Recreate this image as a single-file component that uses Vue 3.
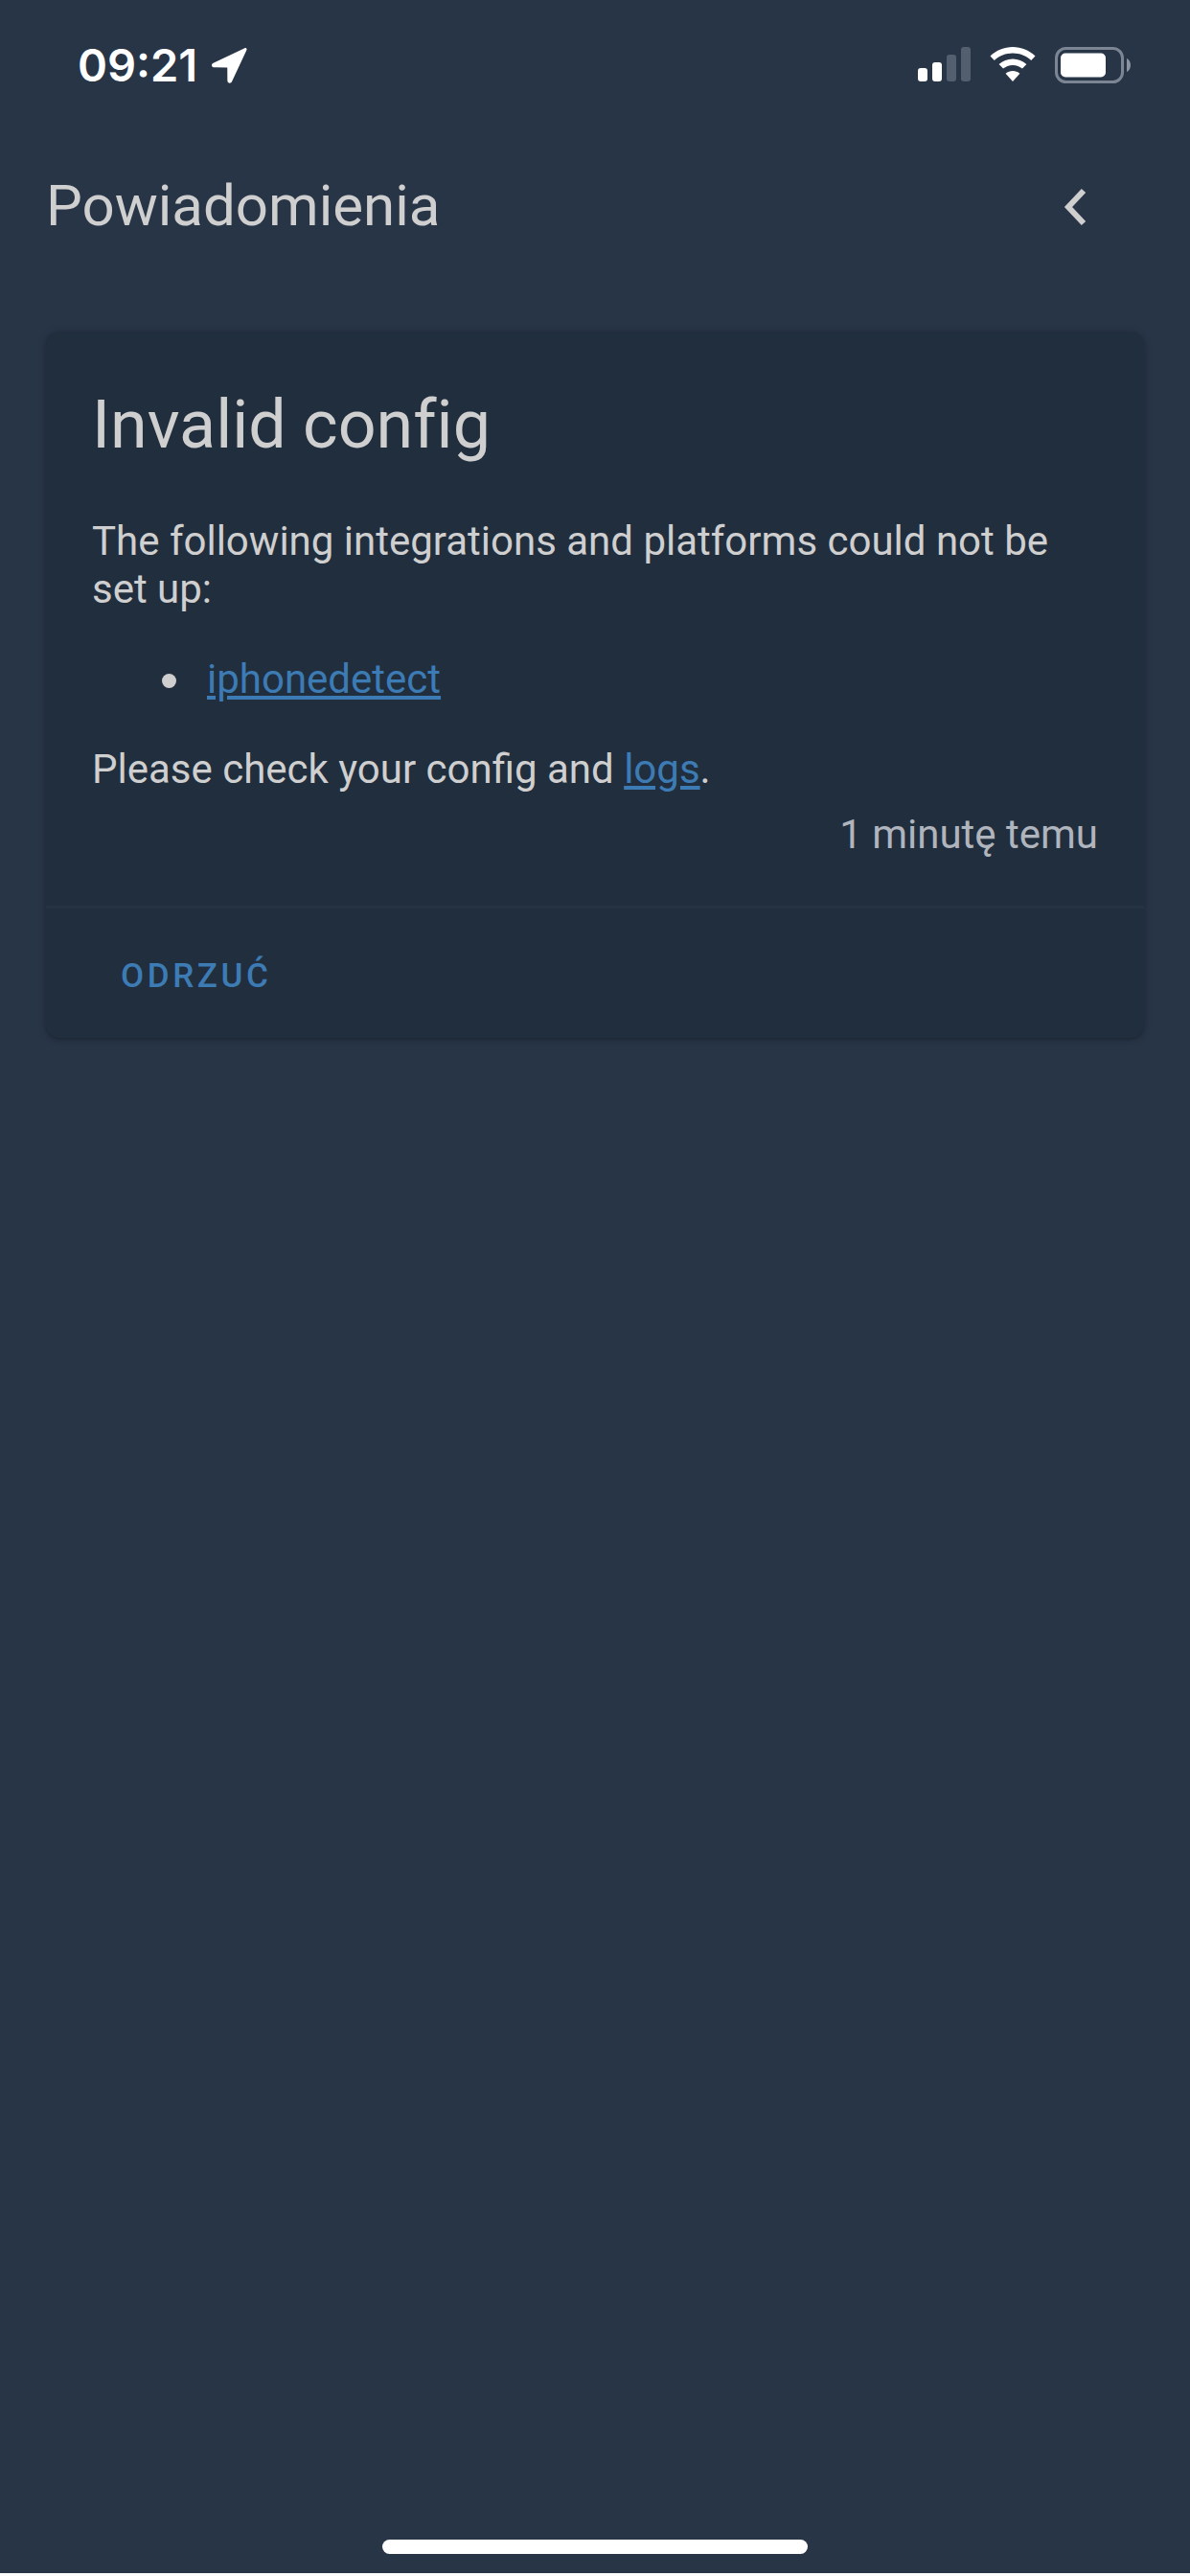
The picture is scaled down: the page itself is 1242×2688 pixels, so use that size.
<script setup>
const integrations = ["iphonedetect"];
</script>

<template>
  <div class="page">
    <div class="status-bar">
      <div class="clock">
        <span class="time">09:21</span>
        <svg class="arrow" width="38" height="38" viewBox="0 0 37 37">
          <path
            d="M34.5 1.2 2.600 16.200c-2.600 1.200-1.900 4.600 1 4.600l13.200.1.1 13.200c0 2.900 3.500 3.500 4.600 1L36.400 3.200c.6-1.400-.6-2.600-1.900-2z"
            fill="#fff"
          />
        </svg>
      </div>
      <div class="status-icons">
        <svg width="55" height="36" viewBox="0 0 55 36">
          <rect x="0" y="22" width="10" height="14" rx="3" fill="#fff" />
          <rect x="15" y="16" width="10" height="20" rx="3" fill="#fff" />
          <rect x="30" y="8" width="10" height="28" rx="3" fill="#535f6f" />
          <rect x="45" y="0" width="10" height="36" rx="3" fill="#535f6f" />
        </svg>
        <svg class="wifi" width="48" height="36" viewBox="0 0 48 36">
          <path d="M24 0C15 0 7 3.500 0.500 9.500L4.800 14C10 9.200 16.600 6.500 24 6.500s14 2.700 19.200 7.500l4.300-4.500C41 3.500 33 0 24 0z" fill="#fff" />
          <path d="M24 12.500c-5.500 0-10.500 2.100-14.400 5.600l4.400 4.500c2.700-2.300 6.100-3.700 10-3.700s7.300 1.400 10 3.700l4.400-4.500c-3.900-3.500-8.900-5.600-14.400-5.600z" fill="#fff" />
          <path d="M24 25c-2.800 0-5.300 1-7.400 2.700L24 36l7.400-8.300C29.300 26 26.800 25 24 25z" fill="#fff" />
        </svg>
        <svg class="battery" width="79" height="38" viewBox="0 0 79 38">
          <rect x="1.500" y="1.500" width="69" height="35" rx="10" fill="none" stroke="#7b8593" stroke-width="3" />
          <rect x="6" y="6.500" width="47" height="25" rx="5" fill="#fff" />
          <path d="M75 12c2.500 1 4 3.700 4 7s-1.500 6-4 7z" fill="#8a939f" />
        </svg>
      </div>
    </div>

    <header class="app-bar">
      <h1 class="app-title">Powiadomienia</h1>
      <svg class="back" width="26" height="42" viewBox="0 0 26 42">
        <path d="M21 4 5 21l16 17" fill="none" stroke="#cfcfcf" stroke-width="6" />
      </svg>
    </header>

    <section class="card">
      <div class="card-body">
        <h2 class="card-title">Invalid config</h2>
        <p class="intro">The following integrations and platforms could not be set up:</p>
        <ul class="list">
          <li v-for="name in integrations" :key="name" class="list-item">
            <a class="link" href="#">{{ name }}</a>
          </li>
        </ul>
        <p class="check">Please check your config and <a class="link" href="#">logs</a>.</p>
        <div class="when">1 minutę temu</div>
      </div>
      <div class="card-actions">
        <button class="dismiss" type="button">ODRZUĆ</button>
      </div>
    </section>

    <div class="home-area">
      <div class="home-bar"></div>
    </div>
  </div>
</template>

<style scoped>
.page {
  display: flex;
  flex-direction: column;
  width: 1242px;
  height: 2685px;
  overflow: hidden;
  background: #283547;
  font-family: Roboto, "Liberation Sans", sans-serif;
  color: #cfcfcf;
}
.status-bar {
  display: flex;
  justify-content: space-between;
  align-items: flex-start;
  height: 132px;
  padding: 49px 62px 0 81px;
  box-sizing: border-box;
}
.clock {
  display: flex;
  align-items: center;
  gap: 14px;
}
.time {
  font-family: Inter, "Liberation Sans", sans-serif;
  font-size: 47px;
  font-weight: 600;
  line-height: 38px;
  color: #fff;
}
.status-icons {
  display: flex;
  align-items: flex-start;
  gap: 20px;
}
.app-bar {
  display: flex;
  justify-content: space-between;
  align-items: center;
  height: 168px;
  padding: 0 106px 3px 48px;
  box-sizing: border-box;
}
.app-title {
  margin: 0;
  font-size: 60px;
  font-weight: 400;
  color: #cfcfcf;
}
.back {
  margin-top: 3px;
}
.card {
  margin: 46px 48px 0;
  border-radius: 14px;
  background: #212e3e;
  box-shadow: 0 2px 4px -1px rgba(0, 0, 0, 0.25), 0 1px 8px rgba(0, 0, 0, 0.16);
}
.card-body {
  padding: 55px 48px 49px;
  border-bottom: 3px solid #263343;
}
.card-title {
  margin: 0 0 55px;
  font-size: 70px;
  font-weight: 400;
  line-height: 84px;
  font-variant-ligatures: none;
}
.intro,
.check {
  margin: 0;
  font-size: 42px;
  line-height: 50px;
}
.list {
  margin: 44px 0 44px;
  padding: 0 0 0 120px;
  list-style: none;
  font-size: 42px;
  line-height: 50px;
}
.list-item {
  position: relative;
}
.list-item::before {
  content: "";
  position: absolute;
  left: -47px;
  top: 19px;
  width: 15px;
  height: 15px;
  border-radius: 50%;
  background: #cfcfcf;
}
.link {
  color: #3d7bb4;
  text-decoration: underline;
}
.when {
  margin-top: 18px;
  text-align: right;
  font-size: 42px;
  line-height: 50px;
  color: #b0b4bd;
}
.card-actions {
  padding: 26px 24px 0 54px;
  height: 135px;
  box-sizing: border-box;
}
.dismiss {
  padding: 24px;
  border: 0;
  background: none;
  font-family: inherit;
  font-size: 35px;
  font-weight: 500;
  letter-spacing: 3.600px;
  color: #3d7bb4;
}
.home-area {
  display: flex;
  justify-content: center;
  margin-top: auto;
  padding-bottom: 20px;
}
.home-bar {
  width: 444px;
  height: 15px;
  border-radius: 8px;
  background: #fff;
}
</style>

<style>
html,
body {
  margin: 0;
  background: #fff;
}
</style>
